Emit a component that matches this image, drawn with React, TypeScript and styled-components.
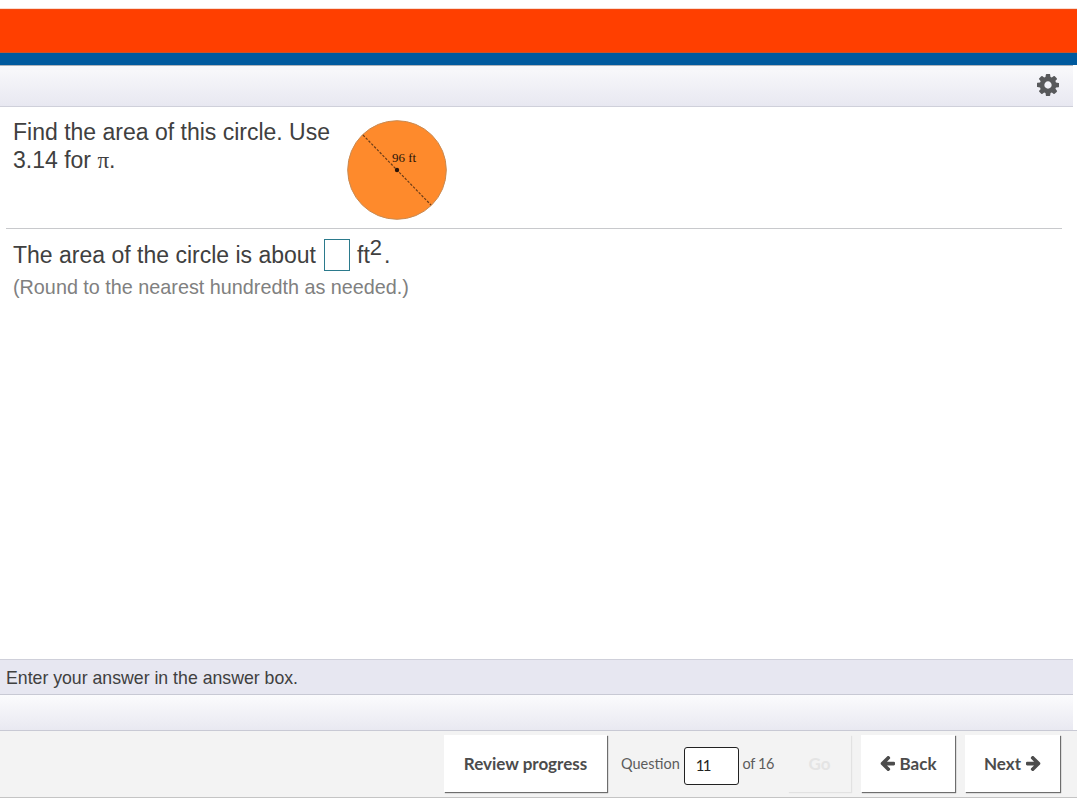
import React from 'react';
import styled, { createGlobalStyle } from 'styled-components';

const GlobalStyle = createGlobalStyle`
    html, body {
        margin: 0;
        padding: 0;
        background: #fff;
        overflow: hidden;
    }
    * {
        box-sizing: border-box;
    }
`

const Page = styled.div`
    width: 1077px;
    height: 798px;
    display: flex;
    flex-direction: column;
    overflow: hidden;
    font-family: "Liberation Sans", Arial, sans-serif;
    color: #404040;
`
const TopStrip = styled.div`
    height: 9px;
    background: #fff;
    border-bottom: 1px solid #fbdccf;
`
const OrangeBar = styled.div`
    height: 44px;
    background: #ff3f00;
    border-top: 1px solid #ee4a14;
    border-bottom: 1px solid #c9552a;
`
const BlueBar = styled.div`
    height: 12px;
    background: #005a9e;
`
const Toolbar = styled.div`
    height: 42px;
    width: 1073px;
    display: flex;
    align-items: center;
    justify-content: flex-end;
    padding-right: 14px;
    padding-bottom: 3px;
    color: #58595b;
    background: linear-gradient(#f9f9fb, #e8e8f1);
    border-top: 1px solid #aeb3bb;
    border-bottom: 1px solid #cfd0da;
`
const Main = styled.main`
    flex: 1;
    padding: 0 15px 0 6px;
`
const QuestionRow = styled.section`
    height: 122px;
    display: flex;
    padding: 11px 0 0 7px;
    border-bottom: 1px solid #c8c9cc;
`
const QuestionText = styled.p`
    width: 335px;
    margin: 0;
    font-size: 23px;
    line-height: 28px;
`
const Pi = styled.span`
    display: inline-block;
    font-family: "Liberation Serif", serif;
    line-height: 1;
`
const AnswerLine = styled.div`
    display: flex;
    align-items: center;
    height: 32px;
    margin: 10px 0 0 7px;
    font-size: 23px;
    white-space: pre;
`
const AnswerBox = styled.span`
    width: 26px;
    height: 32px;
    margin: 0 7px 0 8px;
    background: #fff;
    border: 1px solid #2b7a8c;
`
const Sup = styled.sup`
    margin-right: 2px;
    font-size: 22px;
    line-height: 0;
    vertical-align: 8px;
`
const Hint = styled.p`
    margin: 2px 0 0 7px;
    color: #808080;
    font-size: 19.8px;
    line-height: 28px;
`
const InstructionBar = styled.div`
    width: 1073px;
    height: 36px;
    display: flex;
    align-items: center;
    padding: 2px 0 0 6px;
    font-size: 17.7px;
    background: #e7e7f1;
    border-top: 1px solid #cfd0da;
    border-bottom: 1px solid #c8c9d4;
`
const GradientBar = styled.div`
    width: 1073px;
    height: 35px;
    background: linear-gradient(#fbfbfd, #e9e9f1);
`
const Footer = styled.footer`
    height: 68px;
    display: flex;
    align-items: center;
    justify-content: flex-end;
    padding: 0 17px 1px 0;
    background: #f3f3f3;
    border-top: 1px solid #c8c9d4;
    border-bottom: 1px solid #c4c4c4;
    font-family: Lato, "Open Sans", sans-serif;
`
const Button = styled.button<{ disabled?: boolean; width: number }>`
    width: ${props => props.width}px;
    height: 57px;
    display: flex;
    align-items: center;
    justify-content: center;
    gap: 5px;
    padding: 0;
    border: none;
    font-family: inherit;
    font-size: 17px;
    font-weight: 700;
    color: ${props => props.disabled ? '#e4e4e4' : '#4c4c4c'};
    background: ${props => props.disabled ? '#f3f3f3' : '#fff'};
    box-shadow: ${props => props.disabled ? '1px 1px 1px #e2e2e2' : '1px 1px 1px #6d6d6d'};
`
const QuestionNav = styled.div`
    width: 153px;
    display: flex;
    align-items: center;
    justify-content: space-between;
    margin: 0 14px;
    font-size: 14.5px;
    color: #5c5c5c;
`
const NavInput = styled.div`
    width: 55px;
    height: 38px;
    display: flex;
    align-items: center;
    margin-top: 4px;
    padding: 0 0 1px 11px;
    color: #222;
    letter-spacing: -1.5px;
    font-size: 15px;
    background: #fff;
    border: 1px solid #222;
    border-radius: 3px;
`
const OfLabel = styled.span`
    letter-spacing: -0.4px;
`
const NavButtons = styled.div`
    display: flex;
    gap: 10px;
`
const Glyph = styled.svg`
    display: block;
    fill: currentColor;
`

const CogIcon: React.FC = () => (
    <Glyph width="22" height="22" viewBox="128 128 1536 1536">
        <path d="M1152 896q0-106-75-181t-181-75-181 75-75 181 75 181 181 75 181-75 75-181zm512-109v222q0 12-8 23t-20 13l-185 28q-19 54-39 91 35 50 107 138 10 12 10 25t-9 23q-27 37-99 108t-94 71q-12 0-26-9l-138-108q-44 23-91 38-16 136-29 186-7 28-36 28h-222q-14 0-24.5-8.5t-11.5-21.5l-28-184q-49-16-90-37l-141 107q-10 9-25 9-14 0-25-11-126-114-165-168-7-10-7-23 0-12 8-23 15-21 51-66.5t54-70.5q-27-50-41-99l-183-27q-13-2-21-12.5t-8-23.5v-222q0-12 8-23t19-13l186-28q14-46 39-92-40-57-107-138-10-12-10-24 0-10 9-23 26-36 98.5-107.5t94.5-71.5q13 0 26 10l138 107q44-23 91-38 16-136 29-186 7-28 36-28h222q14 0 24.5 8.5t11.5 21.5l28 184q49 16 90 37l142-107q9-9 24-9 13 0 25 10 129 119 165 170 7 8 7 22 0 12-8 23-15 21-51 66.5t-54 70.5q26 50 41 98l183 28q13 2 22 12.5t9 23.5z" />
    </Glyph>
)

const ArrowLeftIcon: React.FC = () => (
    <Glyph width="15" height="15" viewBox="128 192 1536 1536">
        <path d="M1664 896v128q0 53-32.5 90.5t-84.5 37.5h-704l293 294q38 36 38 90t-38 90l-75 76q-37 37-90 37-52 0-91-37l-651-652q-37-37-37-90 0-52 37-91l651-650q38-38 91-38 52 0 90 38l75 74q38 38 38 91t-38 91l-293 293h704q52 0 84.5 37.5t32.5 90.5z" />
    </Glyph>
)

const ArrowRightIcon: React.FC = () => (
    <Glyph width="15" height="15" viewBox="128 192 1536 1536">
        <path d="M1600 960q0 54-37 91l-651 651q-39 37-91 37-51 0-90-37l-75-75q-38-38-38-91t38-91l293-293h-704q-52 0-84.5-37.5t-32.5-90.5v-128q0-53 32.5-90.5t84.5-37.5h704l-293-294q-38-36-38-90t38-90l75-75q38-38 90-38 53 0 91 38l651 651q37 35 37 90z" />
    </Glyph>
)

const CircleFigure: React.FC = () => (
    <svg width="102" height="102" viewBox="0 0 102 102" style={{ marginLeft: -2, marginTop: 1 }}>
        <circle cx="51" cy="51" r="49.3" fill="#fe8a2c" stroke="#c98a52" strokeWidth="1" />
        <line x1="17" y1="16" x2="85" y2="86" stroke="#6b3d18" strokeWidth="1.2" strokeDasharray="2.5 1.5" />
        <circle cx="51" cy="51" r="2.2" fill="#2a1408" />
        <text x="46" y="43" fontFamily="'Liberation Serif', serif" fontSize="13" fill="#2a1408">96 ft</text>
    </svg>
)

const App: React.FC = () => {
    return (
        <Page>
            <GlobalStyle />
            <TopStrip />
            <OrangeBar />
            <BlueBar />
            <Toolbar>
                <CogIcon />
            </Toolbar>
            <Main>
                <QuestionRow>
                    <QuestionText>Find the area of this circle. Use 3.14 for <Pi>π</Pi>.</QuestionText>
                    <CircleFigure />
                </QuestionRow>
                <AnswerLine>
                    The area of the circle is about<AnswerBox /><span>ft<Sup>2</Sup>.</span>
                </AnswerLine>
                <Hint>(Round to the nearest hundredth as needed.)</Hint>
            </Main>
            <InstructionBar>Enter your answer in the answer box.</InstructionBar>
            <GradientBar />
            <Footer>
                <Button width={163}>Review progress</Button>
                <QuestionNav>
                    <span>Question</span><NavInput>11</NavInput><OfLabel>of 16</OfLabel>
                </QuestionNav>
                <NavButtons>
                    <Button width={63} disabled>Go</Button>
                    <Button width={94}><ArrowLeftIcon />Back</Button>
                    <Button width={95}>Next<ArrowRightIcon /></Button>
                </NavButtons>
            </Footer>
        </Page>
    )
}

export default App
